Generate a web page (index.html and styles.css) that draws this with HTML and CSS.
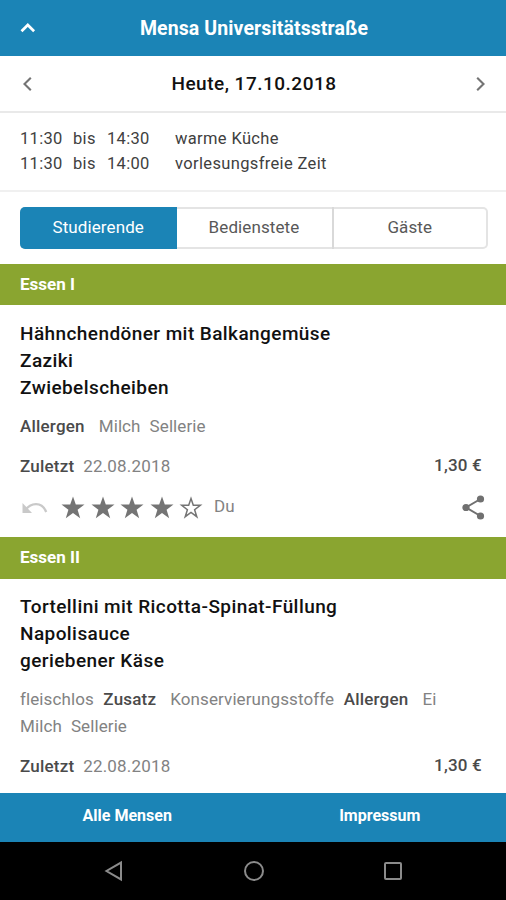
FILE: index.html
```html
<!DOCTYPE html>
<html lang="de">
<head>
<meta charset="utf-8">
<title>Mensa Universitätsstraße</title>
<link rel="stylesheet" href="styles.css">
</head>
<body>
<header class="topbar">
  <svg class="icon" width="16" height="10" viewBox="0 0 16 10"><path d="M1.500 8.300 7.800 2l6.300 6.300" fill="none" stroke="#fff" stroke-width="2.700"/></svg>
  <h1><span>Mensa Universitätsstraße</span></h1>
</header>
<div class="datebar">
  <svg class="icon" width="10" height="16" viewBox="0 0 10 16"><path d="M8.800 1.800 2.500 8l6.300 6.200" fill="none" stroke="#747474" stroke-width="2.100"/></svg>
  <h2><span>Heute, 17.10.2018</span></h2>
  <svg class="icon" width="10" height="16" viewBox="0 0 10 16"><path d="M1.200 1.800 7.500 8l-6.300 6.200" fill="none" stroke="#747474" stroke-width="2.100"/></svg>
</div>
<div class="hours">
  <span class="h">11:30</span><span class="h">bis</span><span class="h">14:30</span><span class="what">warme Küche</span>
  <span class="h">11:30</span><span class="h">bis</span><span class="h">14:00</span><span class="what">vorlesungsfreie Zeit</span>
</div>
<div class="tabwrap">
  <div class="tabs">
    <div class="tab active"><span>Studierende</span></div>
    <div class="tab"><span>Bedienstete</span></div>
    <div class="tab"><span>Gäste</span></div>
  </div>
</div>
<main>
  <h3 class="section"><span>Essen I</span></h3>
  <section class="meal first">
    <div class="dish"><span>Hähnchendöner mit Balkangemüse</span><br><span>Zaziki</span><br><span>Zwiebelscheiben</span></div>
    <div class="tags"><b>Allergen</b><span>Milch</span><span>Sellerie</span></div>
    <div class="last"><div><b>Zuletzt</b><span>22.08.2018</span></div><b class="price">1,30 €</b></div>
    <div class="rating">
      <svg class="undo" width="26" height="13" viewBox="0 0 26 13"><path d="M3 9.500C8.500 1.300 20 0 24.200 11" fill="none" stroke="#c9c9c9" stroke-width="2.300"/><path d="M.5 2v10h9.500z" fill="#c9c9c9"/></svg>
      <div class="stars">
        <svg width="24" height="23" viewBox="0 0 24 23"><path class="full" d="m12 .5 2.800 8h8.700l-6.900 5.200 2.600 8.600-7.200-5.200-7.200 5.200 2.600-8.600L.5 8.500h8.700z"/></svg>
        <svg width="24" height="23" viewBox="0 0 24 23"><path class="full" d="m12 .5 2.800 8h8.700l-6.900 5.200 2.600 8.600-7.200-5.200-7.200 5.200 2.600-8.600L.5 8.500h8.700z"/></svg>
        <svg width="24" height="23" viewBox="0 0 24 23"><path class="full" d="m12 .5 2.800 8h8.700l-6.900 5.200 2.600 8.600-7.200-5.200-7.200 5.200 2.600-8.600L.5 8.500h8.700z"/></svg>
        <svg width="24" height="23" viewBox="0 0 24 23"><path class="full" d="m12 .5 2.800 8h8.700l-6.900 5.200 2.600 8.600-7.200-5.200-7.200 5.200 2.600-8.600L.5 8.500h8.700z"/></svg>
        <svg width="24" height="23" viewBox="0 0 24 23"><path class="empty" d="m12 2.500 2.300 6.800h7l-5.700 4.400 2.200 7-5.800-4.200-5.800 4.200 2.200-7-5.700-4.400h7z"/></svg>
      </div>
      <span class="you">Du</span>
      <svg class="share" width="23" height="25" viewBox="0 0 23 25"><path d="M18.500 4 4 12.500l14.500 8.500" fill="none" stroke="#707070" stroke-width="2"/><g fill="#707070"><circle cx="18.500" cy="4" r="3.600"/><circle cx="4" cy="12.500" r="3.600"/><circle cx="18.500" cy="21" r="3.600"/></g></svg>
    </div>
  </section>
  <h3 class="section tall"><span>Essen II</span></h3>
  <section class="meal second">
    <div class="dish"><span>Tortellini mit Ricotta-Spinat-Füllung</span><br><span>Napolisauce</span><br><span>geriebener Käse</span></div>
    <div class="tags"><span>fleischlos</span><b>Zusatz</b><span>Konservierungsstoffe</span><b>Allergen</b><span>Ei</span><br><span>Milch</span><span>Sellerie</span></div>
    <div class="last"><div><b>Zuletzt</b><span>22.08.2018</span></div><b class="price">1,30 €</b></div>
  </section>
</main>
<footer class="links"><span>Alle Mensen</span><span>Impressum</span></footer>
<nav class="system">
  <svg width="20" height="22" viewBox="0 0 20 22"><path d="M17 2.600v16.800L2.500 11z" fill="none" stroke="#8b8b8b" stroke-width="2"/></svg>
  <svg width="22" height="22" viewBox="0 0 22 22"><circle cx="11" cy="11" r="9" fill="none" stroke="#8b8b8b" stroke-width="2"/></svg>
  <svg width="20" height="20" viewBox="0 0 20 20"><rect x="2" y="2" width="16" height="16" rx="1" fill="none" stroke="#8b8b8b" stroke-width="2"/></svg>
</nav>
</body>
</html>
```
FILE: styles.css
```css
* { box-sizing: border-box; }
body {
  margin: 0;
  width: 506px;
  height: 900px;
  overflow: hidden;
  display: flex;
  flex-direction: column;
  background: #fff;
  font-family: Roboto, "Liberation Sans", sans-serif;
  color: #111;
}
h1, h2, h3 { margin: 0; }
svg { display: block; flex: none; }

.topbar {
  display: grid;
  grid-template-columns: 16px 1fr 16px;
  align-items: center;
  height: 56px;
  padding: 0 18px 0 20px;
  background: #1b84b6;
  color: #fff;
}
h1 { padding-top: 2px; font-size: 19.500px; font-weight: 700; text-align: center; line-height: 54px; letter-spacing: .1px; }

.datebar {
  display: grid;
  grid-template-columns: 10px 1fr 10px;
  align-items: center;
  height: 57px;
  padding: 0 20px 0 22px;
  border-bottom: 2px solid #e9e9e9;
}
h2 { font-size: 19px; font-weight: 500; text-align: center; letter-spacing: .5px; line-height: 55px; }

.hours {
  display: grid;
  grid-template-columns: 53px 34px 68px 1fr;
  grid-auto-rows: 25px;
  height: 79px;
  padding: 13px 20px 0 20px;
  border-bottom: 2px solid #f0f0f0;
  font-size: 16.500px;
  line-height: 25px;
  color: #404040;
}
.h { letter-spacing: .3px; }
.what { letter-spacing: .35px; }

.tabwrap { height: 72px; padding: 15px 18px 0 20px; }
.tabs {
  display: grid;
  grid-template-columns: 156.500px 157px 1fr;
  height: 42px;
  border: 2px solid #e4e4e4;
  border-left: 0;
  border-radius: 5px;
}
.tab {
  display: flex;
  align-items: center;
  justify-content: center;
  margin: -2px 0;
  padding-bottom: 2px;
  border-right: 2px solid #d9d9d9;
  font-size: 17px;
  letter-spacing: .1px;
  color: #585858;
}
.tab:last-child { border-right: 0; }
.tab.active { border: 0; background: #1b84b6; color: #fff; border-radius: 5px 0 0 5px; }

.section {
  height: 41px;
  padding-left: 20px;
  background: #8aa530;
  color: #fff;
  font-size: 17px;
  font-weight: 700;
  line-height: 40px;
}
.tall { height: 42px; }
.meal { padding: 15px 20px 0; }
.first { height: 232px; }
.second { height: 214px; padding-top: 14px; }
.dish { font-size: 19px; font-weight: 500; line-height: 27px; letter-spacing: .42px; }
.tags, .last { font-size: 17px; line-height: 27px; color: #828282; letter-spacing: .1px; }
.last { letter-spacing: .17px; }
.tags { margin-top: 12px; }
.tags > * { margin-right: 9px; }
.tags > :has(+ b) { margin-right: 9.500px; }
.tags > b { margin-right: 14px; }
b { font-weight: 500; color: #4a4a4a; letter-spacing: .2px; }
.last { display: flex; justify-content: space-between; margin-top: 12.500px; padding-right: 4px; }
.last div b { margin-right: 9px; }
.price { line-height: 25px; }

.rating { display: flex; align-items: center; height: 26px; margin-top: 14.500px; }
.undo { margin-left: 2px; margin-right: 13px; }
.stars { display: flex; gap: 5.500px; }
.full { fill: #747474; }
.empty { fill: none; stroke: #747474; stroke-width: 1.500; }
.you { margin-left: 11px; padding-bottom: 2px; font-size: 17px; color: #828282; }
.share { margin-left: auto; margin-right: 1px; }

.links {
  display: grid;
  grid-template-columns: 1fr 1fr;
  height: 49px;
  margin-top: auto;
  padding-left: 1px;
  background: #1b84b6;
  color: #fff;
  font-size: 16px;
  font-weight: 700;
  line-height: 46px;
  text-align: center;
}
.system {
  display: flex;
  align-items: center;
  justify-content: space-between;
  height: 58px;
  padding: 0 103px 0 104px;
  background: #000;
}
```
